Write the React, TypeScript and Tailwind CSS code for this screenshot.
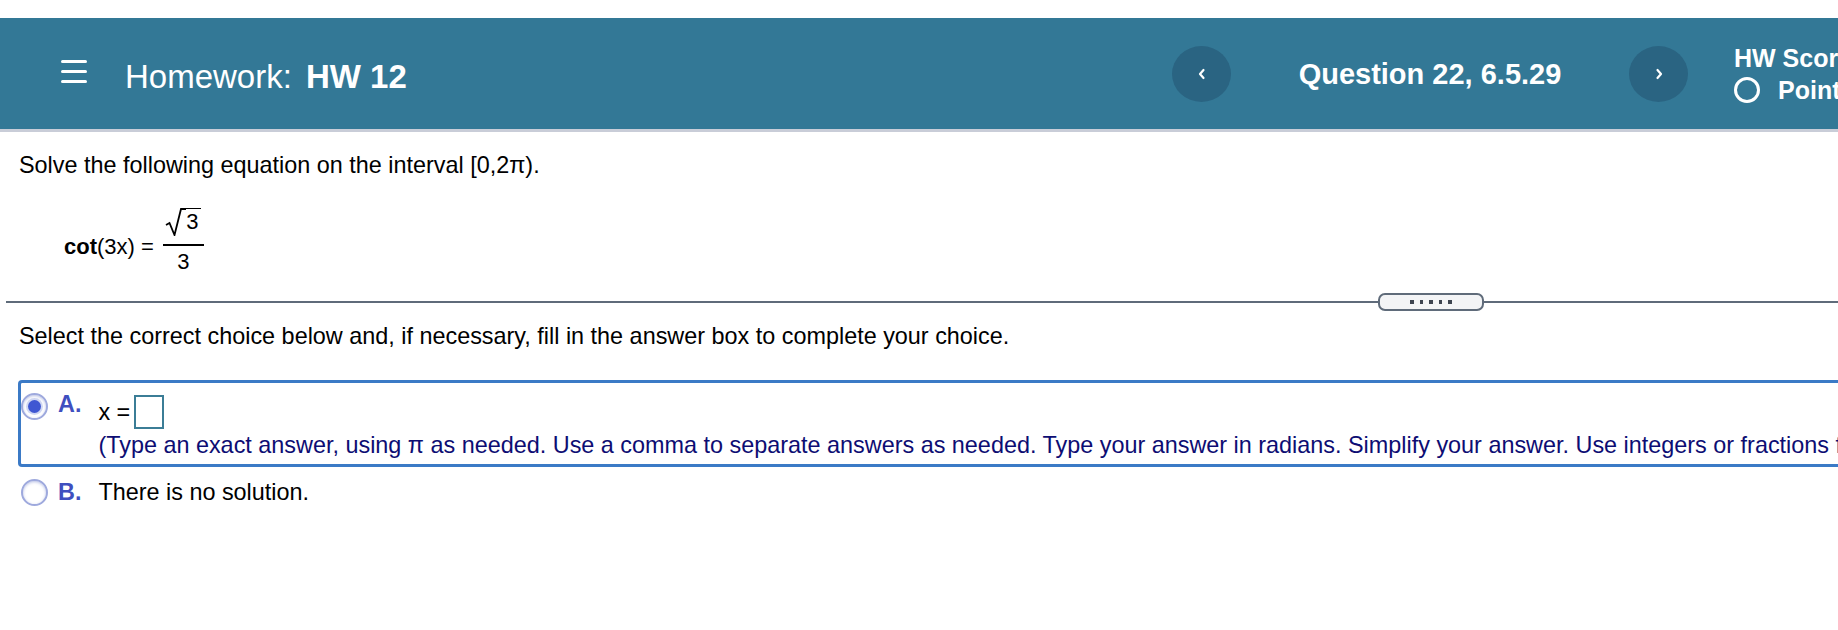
import { ReactNode } from 'react';

function NavButton({ dir }: { dir: 'left' | 'right' }) {
  return (
    <div className="w-[59px] h-[56px] rounded-[50%] bg-[#2a6482] flex items-center justify-center shrink-0">
      <svg width="10" height="16" viewBox="0 0 10 16" fill="none">
        {dir === 'left' ? (
          <polyline points="6.5,4 3,8 6.5,12" stroke="white" strokeWidth="2.2" strokeLinecap="round" strokeLinejoin="round" />
        ) : (
          <polyline points="3.5,4 7,8 3.5,12" stroke="white" strokeWidth="2.2" strokeLinecap="round" strokeLinejoin="round" />
        )}
      </svg>
    </div>
  );
}

function Radio({ checked }: { checked?: boolean }) {
  return (
    <div className="w-[27px] h-[27px] rounded-full border-2 border-[#9ea9dd] bg-white flex items-center justify-center shrink-0 shadow-[inset_0_1px_3px_rgba(60,80,180,0.35)]">
      {checked && <div className="w-[13px] h-[13px] rounded-full bg-[#3f57d2] shadow-[0_0_0_2px_rgba(120,140,220,0.35)]" />}
    </div>
  );
}

function Label({ children }: { children: ReactNode }) {
  return <span className="font-bold text-[#3f4fbf]">{children}</span>;
}

export default function App() {
  return (
    <div className="w-full h-[630px] bg-white overflow-hidden whitespace-nowrap font-['Liberation_Sans',Arial,sans-serif] text-black">
      {/* top bar */}
      <header className="mt-[18px] h-[114px] bg-[#337896] border-b-[3px] border-[#c9cdd8] flex items-center overflow-hidden">
        <div className="w-[1172px] shrink-0 flex items-center">
          <div className="ml-[61px] mb-[5px] w-[26px] flex flex-col gap-[7px]">
            <span className="h-[3px] rounded-full bg-white" />
            <span className="h-[3px] rounded-full bg-white" />
            <span className="h-[3px] rounded-full bg-white" />
          </div>
          <div className="ml-[38px] mt-[7px] text-[33px] text-white">
            Homework:<span className="ml-[14px] font-bold">HW 12</span>
          </div>
        </div>
        <NavButton dir="left" />
        <div className="w-[398px] mt-[2px] shrink-0 text-center text-[29px] font-bold text-white">Question 22, 6.5.29</div>
        <NavButton dir="right" />
        <div className="ml-[46px] flex flex-col text-[25px] font-bold text-white leading-[28px]">
          <div>HW Score: 0%, 0 of 25 points</div>
          <div className="mt-[4px] flex items-center">
            <span className="w-[26px] h-[26px] rounded-full border-[3px] border-white shrink-0" />
            <span className="ml-[18px]">Points: 0 of 1</span>
          </div>
        </div>
      </header>

      <main className="pl-[19px] text-[23.4px] leading-[27px]">
        <p className="mt-[20px]">Solve the following equation on the interval [0,2π).</p>

        <div className="mt-[29px] ml-[45px] flex items-start text-[22px]">
          <div className="mt-[25px]">
            <span className="font-bold">cot</span>(3x) =
          </div>
          <div className="ml-[9px] w-[41px] flex flex-col items-center">
            <div className="h-[36px] flex items-start">
              <svg width="21" height="28" viewBox="0 0 21 28" fill="none" className="shrink-0">
                <path d="M1 17 L4.5 15 L9.5 27 L16 1 L21 1" stroke="black" strokeWidth="1.8" strokeLinejoin="miter" />
              </svg>
              <span className="border-t-[1.8px] border-black leading-[26px] pr-[3px]">3</span>
            </div>
            <div className="w-full h-[2px] bg-black" />
            <div className="mt-[3px] h-[26px] leading-[26px]">3</div>
          </div>
        </div>
      </main>

      <div className="mt-[17px] pl-[6px] h-[20px] flex items-center">
        <div className="w-[1372px] h-[2px] bg-[#5f6b7a] shrink-0" />
        <div className="w-[106px] h-[18px] rounded-[7px] border-2 border-[#5f6b7a] bg-[#f3f4f6] flex items-center justify-center gap-[6px] shrink-0">
          <span className="w-[4px] h-[4px] bg-[#3d4450]" />
          <span className="w-[3px] h-[4px] bg-[#3d4450]" />
          <span className="w-[4px] h-[4px] bg-[#3d4450]" />
          <span className="w-[3px] h-[4px] bg-[#3d4450]" />
          <span className="w-[4px] h-[4px] bg-[#3d4450]" />
        </div>
        <div className="flex-1 h-[2px] bg-[#5f6b7a]" />
      </div>

      <section className="pl-[19px] text-[23.4px] leading-[27px]">
        <p className="mt-[11px]">
          Select the correct choice below and, if necessary, fill in the answer box to complete your choice.
        </p>

        <div className="mt-[30px] -ml-[1px] h-[87px] border-[3px] border-r-0 border-[#3b7ac6] rounded-l-[4px] flex items-start">
          <div className="mt-[10px]">
            <Radio checked />
          </div>
          <div className="ml-[10px] mt-[8px]">
            <Label>A.</Label>
          </div>
          <div className="ml-[17px] flex flex-col">
            <div className="mt-[12px] flex items-center">
              <span>x =</span>
              <span className="ml-[4px] w-[30px] h-[34px] border-2 border-[#3b7d96] bg-white" />
            </div>
            <div className="mt-[3px] text-[#0d0d73]">
              (Type an exact answer, using π as needed. Use a comma to separate answers as needed. Type your answer in radians. Simplify your answer. Use integers or fractions for any numbers in the expression.)
            </div>
          </div>
        </div>

        <div className="mt-[12px] flex items-center">
          <div className="ml-[2px]">
            <Radio />
          </div>
          <div className="ml-[10px]">
            <Label>B.</Label>
          </div>
          <div className="ml-[17px]">There is no solution.</div>
        </div>
      </section>
    </div>
  );
}
